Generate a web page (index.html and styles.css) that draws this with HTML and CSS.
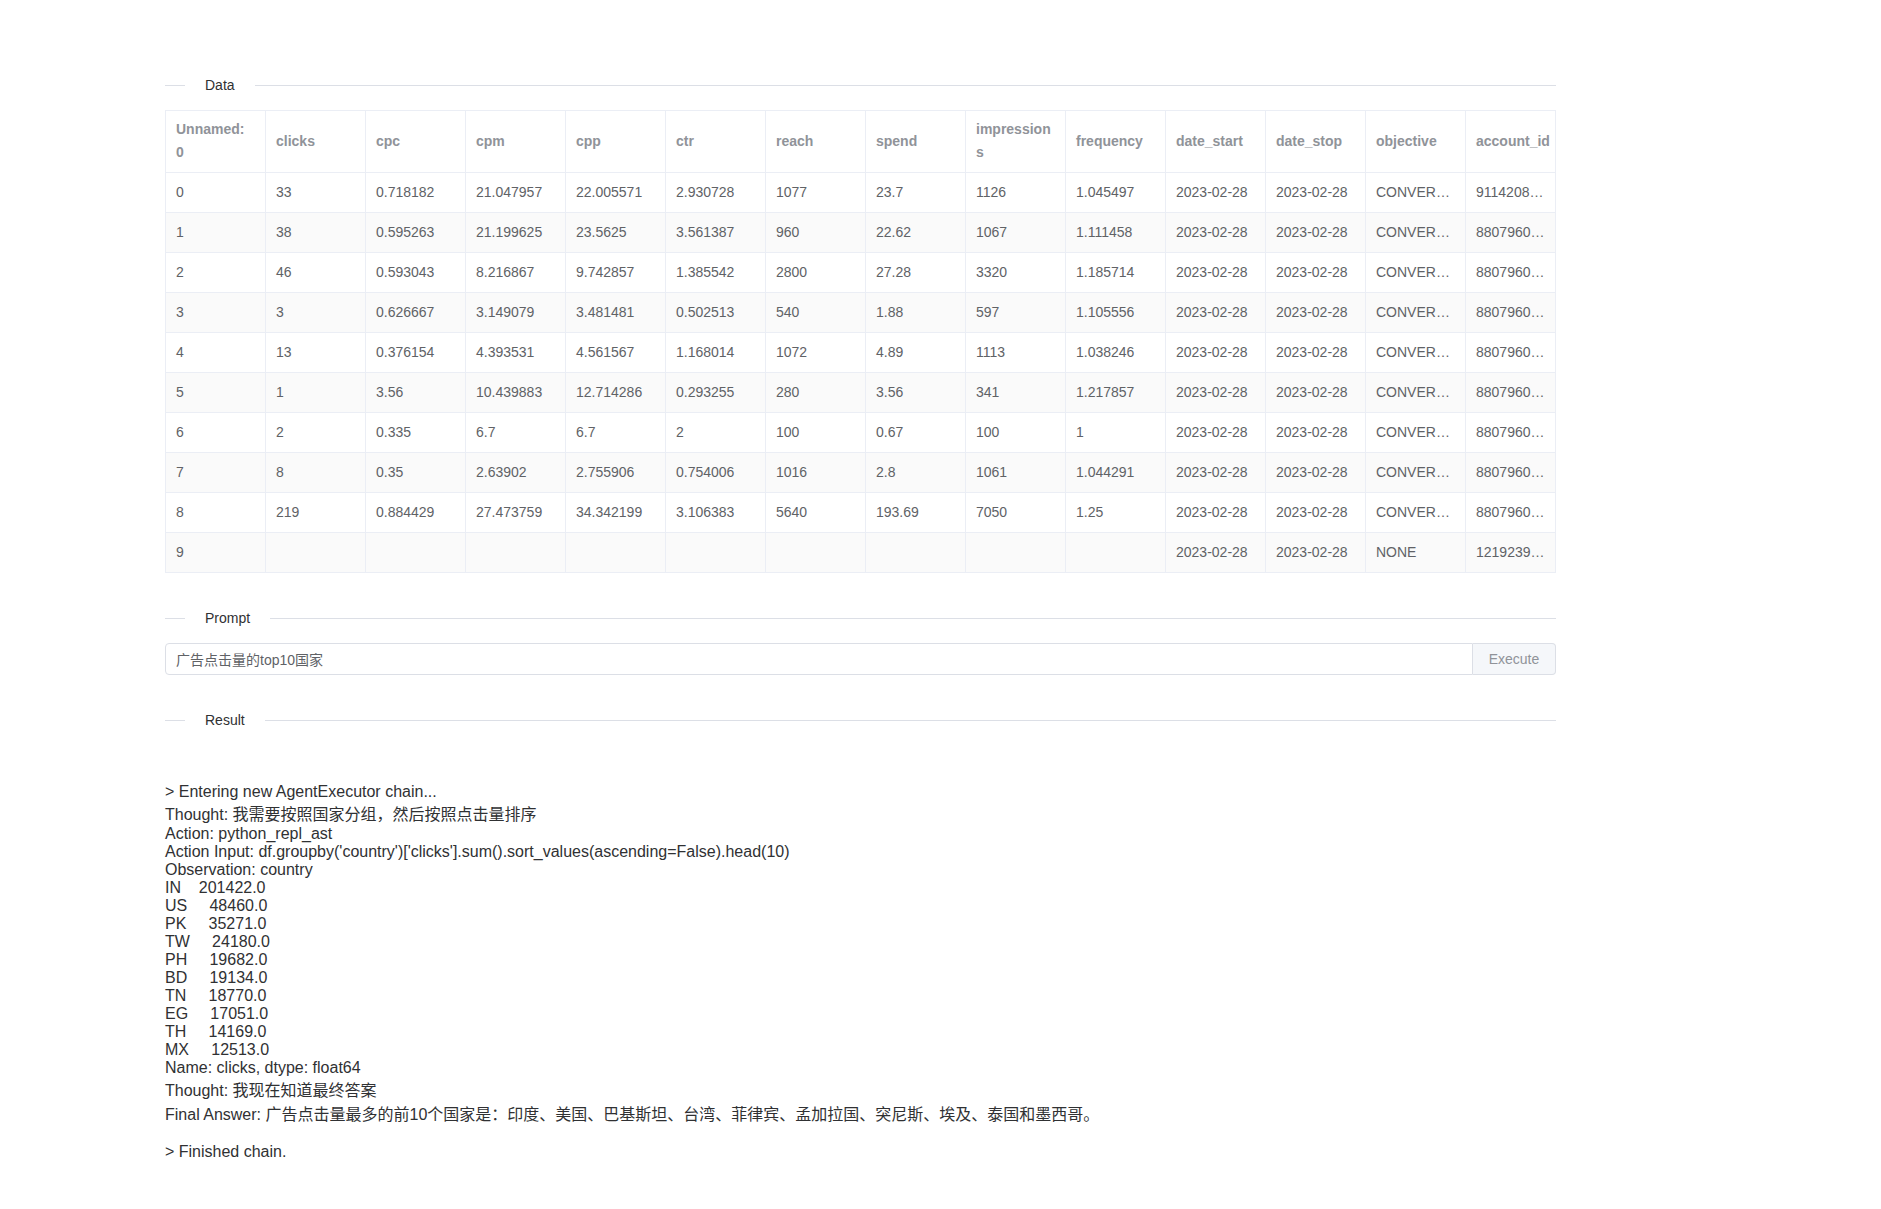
FILE: index.html
```html
<!DOCTYPE html>
<html lang="zh">
<head>
<meta charset="utf-8">
<title>Data Agent</title>
<link rel="stylesheet" href="styles.css">
</head>
<body>
<div class="page">
  <div class="divider"><span class="divider-text">Data</span></div>
  <div class="table-wrap">
    <table class="data-table">
      <colgroup>
        <col class="c"><col class="c"><col class="c"><col class="c"><col class="c"><col class="c"><col class="c"><col class="c"><col class="c"><col class="c"><col class="c"><col class="c"><col class="c"><col>
      </colgroup>
      <thead>
        <tr>
          <th><div class="cell">Unnamed: 0</div></th>
          <th><div class="cell">clicks</div></th>
          <th><div class="cell">cpc</div></th>
          <th><div class="cell">cpm</div></th>
          <th><div class="cell">cpp</div></th>
          <th><div class="cell">ctr</div></th>
          <th><div class="cell">reach</div></th>
          <th><div class="cell">spend</div></th>
          <th><div class="cell">impressions</div></th>
          <th><div class="cell">frequency</div></th>
          <th><div class="cell">date_start</div></th>
          <th><div class="cell">date_stop</div></th>
          <th><div class="cell">objective</div></th>
          <th class="last"><div class="cell">account_id</div></th>
        </tr>
      </thead>
      <tbody>
        <tr><td><div class="cell">0</div></td><td><div class="cell">33</div></td><td><div class="cell">0.718182</div></td><td><div class="cell">21.047957</div></td><td><div class="cell">22.005571</div></td><td><div class="cell">2.930728</div></td><td><div class="cell">1077</div></td><td><div class="cell">23.7</div></td><td><div class="cell">1126</div></td><td><div class="cell">1.045497</div></td><td><div class="cell">2023-02-28</div></td><td><div class="cell">2023-02-28</div></td><td><div class="cell">CONVERSIONS</div></td><td><div class="cell">911420834716025</div></td></tr>
        <tr><td><div class="cell">1</div></td><td><div class="cell">38</div></td><td><div class="cell">0.595263</div></td><td><div class="cell">21.199625</div></td><td><div class="cell">23.5625</div></td><td><div class="cell">3.561387</div></td><td><div class="cell">960</div></td><td><div class="cell">22.62</div></td><td><div class="cell">1067</div></td><td><div class="cell">1.111458</div></td><td><div class="cell">2023-02-28</div></td><td><div class="cell">2023-02-28</div></td><td><div class="cell">CONVERSIONS</div></td><td><div class="cell">880796043217654</div></td></tr>
        <tr><td><div class="cell">2</div></td><td><div class="cell">46</div></td><td><div class="cell">0.593043</div></td><td><div class="cell">8.216867</div></td><td><div class="cell">9.742857</div></td><td><div class="cell">1.385542</div></td><td><div class="cell">2800</div></td><td><div class="cell">27.28</div></td><td><div class="cell">3320</div></td><td><div class="cell">1.185714</div></td><td><div class="cell">2023-02-28</div></td><td><div class="cell">2023-02-28</div></td><td><div class="cell">CONVERSIONS</div></td><td><div class="cell">880796043217654</div></td></tr>
        <tr><td><div class="cell">3</div></td><td><div class="cell">3</div></td><td><div class="cell">0.626667</div></td><td><div class="cell">3.149079</div></td><td><div class="cell">3.481481</div></td><td><div class="cell">0.502513</div></td><td><div class="cell">540</div></td><td><div class="cell">1.88</div></td><td><div class="cell">597</div></td><td><div class="cell">1.105556</div></td><td><div class="cell">2023-02-28</div></td><td><div class="cell">2023-02-28</div></td><td><div class="cell">CONVERSIONS</div></td><td><div class="cell">880796043217654</div></td></tr>
        <tr><td><div class="cell">4</div></td><td><div class="cell">13</div></td><td><div class="cell">0.376154</div></td><td><div class="cell">4.393531</div></td><td><div class="cell">4.561567</div></td><td><div class="cell">1.168014</div></td><td><div class="cell">1072</div></td><td><div class="cell">4.89</div></td><td><div class="cell">1113</div></td><td><div class="cell">1.038246</div></td><td><div class="cell">2023-02-28</div></td><td><div class="cell">2023-02-28</div></td><td><div class="cell">CONVERSIONS</div></td><td><div class="cell">880796043217654</div></td></tr>
        <tr><td><div class="cell">5</div></td><td><div class="cell">1</div></td><td><div class="cell">3.56</div></td><td><div class="cell">10.439883</div></td><td><div class="cell">12.714286</div></td><td><div class="cell">0.293255</div></td><td><div class="cell">280</div></td><td><div class="cell">3.56</div></td><td><div class="cell">341</div></td><td><div class="cell">1.217857</div></td><td><div class="cell">2023-02-28</div></td><td><div class="cell">2023-02-28</div></td><td><div class="cell">CONVERSIONS</div></td><td><div class="cell">880796043217654</div></td></tr>
        <tr><td><div class="cell">6</div></td><td><div class="cell">2</div></td><td><div class="cell">0.335</div></td><td><div class="cell">6.7</div></td><td><div class="cell">6.7</div></td><td><div class="cell">2</div></td><td><div class="cell">100</div></td><td><div class="cell">0.67</div></td><td><div class="cell">100</div></td><td><div class="cell">1</div></td><td><div class="cell">2023-02-28</div></td><td><div class="cell">2023-02-28</div></td><td><div class="cell">CONVERSIONS</div></td><td><div class="cell">880796043217654</div></td></tr>
        <tr><td><div class="cell">7</div></td><td><div class="cell">8</div></td><td><div class="cell">0.35</div></td><td><div class="cell">2.63902</div></td><td><div class="cell">2.755906</div></td><td><div class="cell">0.754006</div></td><td><div class="cell">1016</div></td><td><div class="cell">2.8</div></td><td><div class="cell">1061</div></td><td><div class="cell">1.044291</div></td><td><div class="cell">2023-02-28</div></td><td><div class="cell">2023-02-28</div></td><td><div class="cell">CONVERSIONS</div></td><td><div class="cell">880796043217654</div></td></tr>
        <tr><td><div class="cell">8</div></td><td><div class="cell">219</div></td><td><div class="cell">0.884429</div></td><td><div class="cell">27.473759</div></td><td><div class="cell">34.342199</div></td><td><div class="cell">3.106383</div></td><td><div class="cell">5640</div></td><td><div class="cell">193.69</div></td><td><div class="cell">7050</div></td><td><div class="cell">1.25</div></td><td><div class="cell">2023-02-28</div></td><td><div class="cell">2023-02-28</div></td><td><div class="cell">CONVERSIONS</div></td><td><div class="cell">880796043217654</div></td></tr>
        <tr><td><div class="cell">9</div></td><td><div class="cell"></div></td><td><div class="cell"></div></td><td><div class="cell"></div></td><td><div class="cell"></div></td><td><div class="cell"></div></td><td><div class="cell"></div></td><td><div class="cell"></div></td><td><div class="cell"></div></td><td><div class="cell"></div></td><td><div class="cell">2023-02-28</div></td><td><div class="cell">2023-02-28</div></td><td><div class="cell">NONE</div></td><td><div class="cell">121923945678123</div></td></tr>
      </tbody>
    </table>
  </div>

  <div class="divider section-gap"><span class="divider-text">Prompt</span></div>
  <div class="input-group">
    <input class="prompt-input" type="text" value="广告点击量的top10国家">
    <button class="append-btn" type="button">Execute</button>
  </div>

  <div class="divider section-gap"><span class="divider-text">Result</span></div>
  <div class="result">

&gt; Entering new AgentExecutor chain...
Thought: 我需要按照国家分组，然后按照点击量排序
Action: python_repl_ast
Action Input: df.groupby('country')['clicks'].sum().sort_values(ascending=False).head(10)
Observation: country
IN    201422.0
US     48460.0
PK     35271.0
TW     24180.0
PH     19682.0
BD     19134.0
TN     18770.0
EG     17051.0
TH     14169.0
MX     12513.0
Name: clicks, dtype: float64
Thought: 我现在知道最终答案
Final Answer: 广告点击量最多的前10个国家是：印度、美国、巴基斯坦、台湾、菲律宾、孟加拉国、突尼斯、埃及、泰国和墨西哥。

&gt; Finished chain.</div>
</div>
</body>
</html>
```

FILE: styles.css
```css
html, body {
  margin: 0;
  padding: 0;
  background: #ffffff;
}

body {
  font-family: "Liberation Sans", Arial, "Noto Sans CJK SC", sans-serif;
  color: #303133;
}

.page {
  width: 1391px;
  padding: 75px 0 40px 165px;
}

/* Divider */
.divider {
  display: flex;
  align-items: center;
  height: 20px;
  margin-bottom: 15px;
}

.divider::before {
  content: "";
  width: 20px;
  height: 1px;
  background: #dcdfe6;
  flex: none;
}

.divider::after {
  content: "";
  flex: 1;
  height: 1px;
  background: #dcdfe6;
}

.divider-text {
  padding: 0 20px;
  font-size: 14px;
  line-height: 20px;
  font-weight: 500;
  color: #303133;
  white-space: nowrap;
}

.section-gap {
  margin-top: 35px;
}

/* Table */
.table-wrap {
  border-left: 1px solid #ebeef5;
  border-top: 1px solid #ebeef5;
  overflow: hidden;
}

.data-table {
  width: 100%;
  table-layout: fixed;
  border-collapse: separate;
  border-spacing: 0;
  font-size: 14px;
  color: #606266;
}

.data-table col.c {
  width: 100px;
}

.data-table th,
.data-table td {
  border-right: 1px solid #ebeef5;
  border-bottom: 1px solid #ebeef5;
  text-align: left;
  vertical-align: middle;
  padding: 8px 0;
}

.data-table th {
  padding: 7px 0 8px;
  color: #909399;
  font-weight: bold;
}

.data-table .cell {
  padding: 0 10px;
  line-height: 23px;
  min-height: 23px;
  word-break: break-all;
  box-sizing: border-box;
}

.data-table td .cell {
  white-space: nowrap;
  overflow: hidden;
  text-overflow: ellipsis;
}

.data-table th.last .cell {
  padding-right: 0;
  white-space: nowrap;
}

.data-table tbody tr:nth-child(even) td {
  background: #fafafa;
}

/* Input */
.input-group {
  display: flex;
  height: 32px;
}

.prompt-input {
  flex: 1;
  min-width: 0;
  height: 32px;
  box-sizing: border-box;
  border: 1px solid #dcdfe6;
  border-radius: 4px 0 0 4px;
  padding: 0 10px;
  font-family: "Liberation Sans", Arial, "Noto Sans CJK SC", sans-serif;
  font-size: 14px;
  color: #606266;
  outline: none;
  background: #fff;
}

.append-btn {
  flex: none;
  width: 83px;
  height: 32px;
  box-sizing: border-box;
  border: 1px solid #dcdfe6;
  border-left: 0;
  border-radius: 0 4px 4px 0;
  background: #f5f7fa;
  color: #909399;
  font-family: "Liberation Sans", Arial, sans-serif;
  font-size: 14px;
  padding: 0;
  cursor: pointer;
}

/* Result */
.result {
  padding-top: 2px;
  white-space: pre-wrap;
  font-family: "Liberation Sans", Arial, "Noto Sans CJK SC", sans-serif;
  font-size: 16px;
  line-height: normal;
  color: #303133;
}
```
